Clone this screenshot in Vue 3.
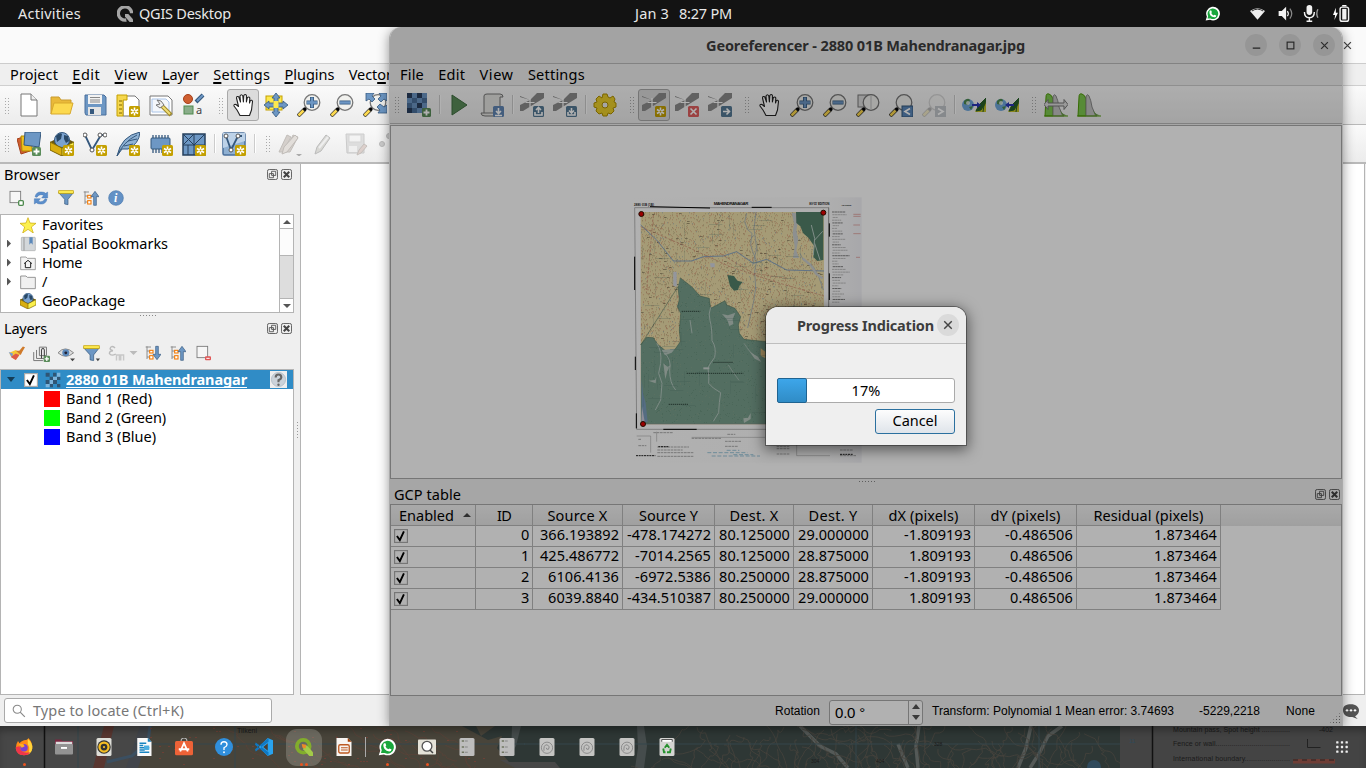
<script setup>
import { h } from 'vue'

// Spreads or tightens a label so that it takes the given width in pixels.
const vFit = {
  mounted(el, b) {
    if (!b.value) return
    const n = el.textContent.length
    const w = el.getBoundingClientRect().width
    el.style.letterSpacing = ((b.value - w) / n).toFixed(3) + 'px'
  },
}

const gold = '<g transform="translate(13 13)"><rect width="11" height="11" rx="1.5" fill="#c4a000"/><path d="M5.5 1.5v8M1.9 3.5l7.2 4M1.9 7.5l7.2-4" stroke="#fff" stroke-width="1.6"/><circle cx="5.5" cy="5.5" r="1" fill="#c4a000"/></g>'
const plusB = '<rect x="15" y="15" width="9" height="9" rx="1.5" fill="#5a8c5a"/><path d="M19.5 16.5v6M16.5 19.5h6" stroke="#fff" stroke-width="1.8"/>'
const glass = (c = '', o = 1) => `<g opacity="${o}"><path d="M1 23l7-7" stroke="#333" stroke-width="4"/><path d="M1.5 22.5l5-5" stroke="#fcd94f" stroke-width="2.6"/><path d="M7 17l3-3" stroke="#000" stroke-width="3"/><circle cx="15" cy="9.5" r="7.8" fill="#f1f1ee" stroke="#777" stroke-width="1.3"/>${c}</g>`
const gcp = '<path d="M17 0h7v5L3 18H0v-6l10-5L0 4V3l10 4z" fill="#8c8c8c"/><path d="M10 5v9M5.5 9.5h9" stroke="#fff" stroke-width="1.2"/>'
const badge = (bg, d) => `<rect x="13" y="13" width="11" height="11" rx="1.5" fill="${bg}"/><path d="${d}" stroke="#fff" stroke-width="1.6" fill="none"/>`
const tree = '<path d="M3 2v19M3 9h5M3 18h5M1 3h8" stroke="#888" fill="none" stroke-width="1.4"/><rect x="7" y="8" width="5" height="4" fill="#fff" stroke="#f57900" stroke-width="1.6"/><rect x="7" y="16" width="5" height="5" fill="#fff" stroke="#f57900" stroke-width="1.6"/>'
const checker = (a, b, c) => [[0, 0, a], [5, 0, b], [10, 0, a], [15, 0, b], [0, 5, b], [5, 5, c], [10, 5, b], [15, 5, c], [0, 10, c], [5, 10, b], [10, 10, a], [15, 10, b], [0, 15, a], [5, 15, c], [10, 15, b], [15, 15, c]].map(([x, y, f]) => `<rect x="${x}" y="${y}" width="5" height="5" fill="${f}"/>`).join('')
const hist = '<path d="M1 23L2 4q0-4 3-3t4 5v17z" fill="#7ec850" stroke="#4e9a06"/><path d="M9 23V4q1-4 3-1 2 4 3 11 2 6 5 9z" fill="#c4c4c4" stroke="#888"/><path d="M16 17q2 4 7 5.500h-5z" fill="#6d9a50"/><path d="M0 23h24" stroke="#4e9a06"/>'
const globe = '<circle cx="6" cy="12" r="6" fill="#6fa8dc"/><path d="M2 8q4-4 6-1l-2 5-4-1zM7 14l4-1-2 4z" fill="#4e8a4e"/><circle cx="6" cy="10" r="2" fill="#fff" opacity=".7"/><path d="M13 19l4-7 7-7v14z" fill="#c6c22a"/><path d="M14 18l3-6 7-7-1 6-4 6zM22 12l-1 7" fill="#27602a" stroke="#27602a"/>'
const box = '<path d="M0 10l12-6 12 6-12 6z" fill="#6b5a10"/><circle cx="12" cy="8" r="7.500" fill="#7ba2ce" stroke="#35587d"/><path d="M6 4q4-4 6-2l-1 5-4 3zM14 3l4 1 1 5-3 2-2-4z" fill="#294866"/><path d="M0 10l12 6v8L0 18z" fill="#d9ae10"/><path d="M24 10l-12 6v8l12-6z" fill="#fbf04c"/><path d="M0 10l12 6 12-6M12 16v8M0 10v8l12 6 12-6v-8" fill="none" stroke="#7c6400"/>'
const hand = '<path d="M9 22.500L6 17 3 13q-.5-2 2-1.500l2.500 2L5.500 5q.2-2.200 2.200-1.300L9.500 9 9 3q1.400-2.500 2.800 0l.6 6L12.800 2.500q1.600-2 2.600 0V9l1-4.500q1.800-1.200 2.400.5L18.500 10l.8-2.500q1.700-.8 2.200 1l-1 8.500-2 5.500z" fill="#fff" stroke="#222" stroke-width="1.100" stroke-linejoin="round"/>'
const pencil = '<path d="M4 22l2-7L15 3l4 3-9 13z" fill="#d8d8d4" stroke="#bbb"/><path d="M8 16l9-11" stroke="#eee" stroke-width="2"/>'
const arrowUp = '<path d="M16 23V10h-4l6-8 6 8h-4v13z" fill="#6d97c4" stroke="#35587d"/>'
const arrowDn = '<path d="M16 2v12h-4l6 8 6-8h-4V2z" fill="#6d97c4" stroke="#35587d"/>'
const funnel = '<path d="M1 4h22l-8 10v8l-5-1v-7z" fill="#6d97c4" stroke="#35587d"/><rect x="1" y="1" width="22" height="4" fill="#fce94f" stroke="#c4a000"/>'

const icons = {
  file: '<path d="M4 1h10l6 6v16H4z" fill="#fff" stroke="#777"/><path d="M14 1v6h6" fill="#eee" stroke="#777"/>',
  folder: '<path d="M1 21V4h8l2 3h10v4" fill="#e9b93a" stroke="#c99b2e"/><path d="M1 21L4 10h19l-3 11z" fill="#fcd94f" stroke="#d8a92d"/>',
  save: '<path d="M2 2h19l2 2v18H3l-1-2z" fill="#6d97c4" stroke="#4a6f9b"/><rect x="5" y="2" width="14" height="9" fill="#f2f2f2"/><path d="M7 4.500h10M7 7h10M7 9h10" stroke="#888"/><rect x="5" y="14" width="13" height="8" fill="#e4e4e4"/><rect x="7" y="16" width="4" height="5" fill="#35587d"/>',
  layout: '<path d="M7 3h12l4 4v16H7z" fill="#fff" stroke="#777"/><path d="M1 2h10v5H7v16H1z" fill="#f5d74e" stroke="#c4a000"/><path d="M3 8h3M3 12h3M3 16h3M3 20h3" stroke="#7c6400"/>' + gold,
  layouts: '<path d="M1 3h18l4 4v15H1z" fill="#fff" stroke="#777"/><path d="M3 6h14l3 3v10H3z" fill="#f4f7fb" stroke="#aac4e8"/><path d="M12 12l10 10" stroke="#a08a2a" stroke-width="4"/><path d="M13 13l8 8" stroke="#f0dd77" stroke-width="2"/><path d="M8 7l4 1 3 4-4 3-4-3 4-1z" fill="#eee" stroke="#777"/>',
  style: '<circle cx="6" cy="6" r="4.500" fill="#cf5f31" stroke="#a5401a"/><rect x="2" y="13" width="9" height="8" fill="#8aad8a" stroke="#4e8a4e"/><path d="M14 9l7-7" stroke="#35587d" stroke-width="4"/><path d="M15 8l6-6" stroke="#6d97c4" stroke-width="2"/><text x="14" y="21" font-size="11" font-family="Noto Sans" fill="#444">a</text>',
  hand,
  pan: '<rect x="2" y="3" width="16" height="14" fill="#fce94f" stroke="#c4a000"/><path d="M12 0l4 5h-2v5h5V8l5 4-5 4v-2h-5v5h2l-4 5-4-5h2v-5H5v2l-5-4 5-4v2h5V5H8z" fill="#6d97c4" stroke="#35587d" stroke-width=".8"/><rect x="9.500" y="8" width="5" height="7" fill="#fce94f"/>',
  zin: glass('<path d="M15 4v11M9.500 9.500h11" stroke="#35587d" stroke-width="4"/><path d="M15 4.500v10M10 9.500h10" stroke="#6d97c4" stroke-width="2.400"/>'),
  zout: glass('<path d="M9.500 9.500h11" stroke="#35587d" stroke-width="4"/><path d="M10 9.500h10" stroke="#6d97c4" stroke-width="2.400"/>'),
  zfull: glass() + '<path d="M3 0h8L9 3l3 3-3 3-3-3-3 2zM24 0h-8l2 3-3 3 3 3 3-3 3 2zM24 20h-9l2-3-3-3 3-3 4 3 3-2z" fill="#6d97c4" stroke="#35587d" stroke-width=".8"/>',
  zlayer: '<rect x="2" y="2" width="14" height="12" fill="#ddd" stroke="#777"/>' + glass('<path d="M15 2v14" stroke="#bbb"/>'),
  zlast: glass() + '<rect x="13" y="13" width="11" height="11" fill="#5b88ba" stroke="#35587d"/><path d="M21 15.500l-5 3 5 3" stroke="#fff" stroke-width="1.700" fill="none"/>',
  znext: glass('', 0.25) + '<rect x="13" y="13" width="11" height="11" fill="#c2c6ca"/><path d="M16 15.500l5 3-5 3" stroke="#fff" stroke-width="1.700" fill="none"/>',
  dsm: '<path d="M0 7l9-3 4 15-9 3z" fill="#cf5f31" stroke="#a5401a"/><path d="M4 4h11v15H5z" fill="#f0c020" stroke="#b08a00"/><path d="M8 0h16l-2 15-15-2z" fill="#6d97c4" stroke="#35587d"/>' + plusB,
  box: box + gold, boxs: box,
  vec: '<path d="M2 3l7 15 9-15h4" fill="none" stroke="#35587d" stroke-width="1.800"/><circle cx="2" cy="3" r="2" fill="#fff" stroke="#555"/><circle cx="9" cy="18" r="2" fill="#fff" stroke="#555"/><circle cx="17" cy="3" r="2" fill="#fff" stroke="#555"/><circle cx="22" cy="3" r="2" fill="#fff" stroke="#555"/>' + gold,
  feather: '<path d="M1 24Q5 4 24 0q-1 12-12 17H6z" fill="#8fb2d4" stroke="#35587d"/><path d="M1 24Q7 10 21 3M8 14l9-2M12 9l9-2" fill="none" stroke="#35587d"/>' + gold,
  chip: '<path d="M4 3v18M7 3v18M10 3v18M13 3v18M16 3v18M19 3v18" stroke="#35587d" stroke-width="1.300"/><rect x="2" y="6" width="19" height="11" rx="1" fill="#6d97c4" stroke="#35587d"/>' + gold,
  mesh: '<rect x="1" y="2" width="22" height="21" fill="#6d97c4" stroke="#253f5c" stroke-width="1.500"/><path d="M12 2v21M1 13h22M1 2l11 11L23 2M1 13L12 2M6 13v10" stroke="#253f5c" fill="none"/>' + gold,
  virt: '<rect x="1" y="1" width="22" height="22" rx="1.500" fill="#8fb0d2" stroke="#4a6f9b" stroke-width="1.500"/><path d="M1 1h22v8L1 16z" fill="#bdd2e8"/><path d="M4 4l5 14 7-14h4" fill="none" stroke="#35587d" stroke-width="1.800"/><circle cx="4" cy="4" r="2" fill="#fff" stroke="#555"/><circle cx="9" cy="18" r="2" fill="#fff" stroke="#555"/><circle cx="16" cy="4" r="2" fill="#fff" stroke="#555"/>' + gold,
  pencils: '<path d="M1 20L9 3l4 2-8 15zM7 20L15 3l5 2-8 15z" fill="#d4cfcb" stroke="#c2beba"/><path d="M4 22l2-7 11-12 3 3L9 20z" fill="#e2deda" stroke="#c0bcb8"/><path d="M18 22h6l-3 2.500z" fill="#aaa"/>',
  pencil,
  savee: '<g opacity=".55"><path d="M2 2h18v19H3z" fill="#ccc" stroke="#aaa"/><rect x="5" y="3" width="12" height="7" fill="#f2f2f2" stroke="#bbb"/><rect x="5" y="14" width="8" height="6" fill="#eee"/></g><path d="M13 23l2-5 5-6 3 2-6 7z" fill="#ddd0cc" stroke="#c5bfbb"/>',
  nodes: '<circle cx="5" cy="12" r="2.500" fill="#ccc" stroke="#bbb"/><circle cx="12" cy="4" r="2.500" fill="#ccc" stroke="#bbb"/>',
  add: '<rect x="3" y="2" width="16" height="17" fill="#f6f6f6" stroke="#777" stroke-width="1.300"/><rect x="16" y="16" width="7" height="7" rx="1.500" fill="#fff" stroke="#4e8a4e" stroke-width="2"/>',
  refresh: '<path d="M3 10Q5 2 13 3q4 0 6 2l3-2v9h-9l3-4Q9 5 6 11zM21 14q-2 8-10 7-4 0-6-2l-3 2v-8h9l-3 4q7 2 10-4z" fill="#5b8ecb" stroke="#3d6fae" stroke-width=".6"/>',
  funnel, funnelm: funnel + '<path d="M18 19h6l-3 4z" fill="#444"/>',
  up: tree + arrowUp, down: tree + arrowDn,
  info: '<circle cx="12" cy="12" r="11" fill="#6391c5" stroke="#4a78ad"/><text x="9" y="18" font-size="18" font-style="italic" font-weight="bold" font-family="Liberation Serif" fill="#fff">i</text>',
  star: '<path d="M12 1l3 8 9 .5-7 5.500 3 9-8-5.500L4 24l3-9-7-5.500L9 9z" fill="#fcf04f" stroke="#c8a400"/>',
  book: '<rect x="2" y="2" width="21" height="20" rx="1" fill="#d3d7da" stroke="#aaa"/><path d="M6 2v20" stroke="#999" stroke-width="1.500"/><path d="M14 2h5v11l-2.500-3-2.500 3z" fill="#5b88ba"/>',
  home: '<path d="M1 3h8l2 2h12v17H1z" fill="#f3f3f3" stroke="#777"/><path d="M6 13l6-5 6 5M8 12v7h8v-7" fill="none" stroke="#222" stroke-width="1.500"/>',
  dir: '<path d="M1 3h8l2 2h12v17H1z" fill="#f0f0f0" stroke="#888" stroke-width="1.300"/>',
  brush: '<path d="M2 11l9-4 6 6-6 8Q3 18 2 11z" fill="#f5c836"/><path d="M1 10l6 2-1 6z" fill="#7b9bd2"/><path d="M4 17l7-5 5 2-5 7z" fill="#dd5a4a"/><path d="M11 8l7 6 2-4 4-7-3-1-5 6z" fill="#cf7a2a"/>',
  group: '<path d="M1 10v12h13M5 7v12h13M9 3h10v12H9z" fill="none" stroke="#777" stroke-width="1.400"/><path d="M12 19V7q2-5 4 0v9" fill="none" stroke="#444" stroke-width="1.500"/>' + plusB,
  eye: '<path d="M0 11Q10 0 22 11 11 21 0 11z" fill="#ddd" stroke="#888" stroke-width="1.400"/><circle cx="11" cy="11" r="5" fill="#5b88ba"/><circle cx="11" cy="11" r="2" fill="#223"/><path d="M17 19h7l-3.500 4z" fill="#444"/>',
  eps: '<path d="M10 4Q4 0 3 5q0 2 4 3-5 0-5 4 2 4 9 1" stroke="#bbb" stroke-width="2" fill="none"/><path d="M12 22v-8h4v8M18 22v-8h4v8" stroke="#c8c8c8" stroke-width="2" fill="none"/>',
  rem: '<rect x="3" y="2" width="16" height="17" fill="#f6f6f6" stroke="#777" stroke-width="1.300"/><rect x="15" y="17" width="9" height="6" rx="1.500" fill="#e05656"/><path d="M17 20h5" stroke="#fff" stroke-width="1.500"/>',
  raster: '<path d="M1 1h6v6H1zM7 7h5v5H7zM12 12h6v6h-6zM1 12h6v6H1zM12 1h5v6h-5zM18 7h5v5h-5zM7 18h5v5H7zM18 18h5v5h-5z" fill="#2f5575"/><path d="M18 1h5v6h-5zM12 7h6v5h-6zM7 12h5v6H7zM1 18h6v5H1z" fill="#7db4dc"/>',
  qm: '<rect width="24" height="24" fill="#eee"/><circle cx="12" cy="12" r="10" fill="#ccd3da" stroke="#a8b5c0"/><path d="M8 9q0-4 4-4t4 4q0 2-4 4v3" fill="none" stroke="#666" stroke-width="3"/><circle cx="12" cy="19.500" r="1.700" fill="#666"/>',
  addr: checker('#293f5e', '#6d97c4', '#4a6f9b') + plusB,
  play: '<path d="M5 2l15 10L5 22z" fill="#5a8c5a" stroke="#3f6e40"/>',
  script: '<path d="M4 20V3q0-2 3-2h13q3 0 3 3h-3v16H1q0 3 4 3h13" fill="#e6e6e2" stroke="#777"/>' + badge('#6186b5', 'M18.500 15v5M16 18l2.500 2.500L21 18M15 22.500h7'),
  gload: gcp + badge('#557a95', 'M18.500 20v-5M16 17l2.500-2.500L21 17M15 19v3h7v-3'),
  gsave: gcp + badge('#557a95', 'M18.500 15v5M16 17.500l2.500 2.500 2.500-2.500M15 19v3h7v-3'),
  gear: '<path d="M10 1h4l1 3 2 1 3-2 2 3-1 3 2 1v4l-3 1 1 3-3 3-3-1-1 3h-4l-1-3-3 1-3-3 1-3-3-1v-4l3-1-1-3 3-3 3 2z" fill="#ecd02c" stroke="#b09000"/><circle cx="12" cy="12" r="3" fill="#eee" stroke="#b09000"/>',
  gadd: gcp + gold,
  gdel: gcp + badge('#e05f5f', 'M15.500 15.500l6 6M21.500 15.500l-6 6'),
  gmove: gcp + badge('#557a95', 'M15 18.500h6M18.500 15.500l3 3-3 3'),
  lg: globe + '<path d="M10 11h5V9l4 3-4 3v-2h-5z" fill="#2a36b8"/>',
  lq: globe + '<path d="M19 11h-5V9l-4 3 4 3v-2h5z" fill="#2a36b8"/>',
  hist2: hist + '<path d="M0 11.500l4-5v3.500h16V6.500l4 5-4 5V13H4v3.500z" fill="#ddd" stroke="#777"/>',
  hist,
  // status area and dock
  qlogo: '<path d="M14 21A10 10 0 1 1 22 11" fill="none" stroke="#a5a5a5" stroke-width="5"/><path d="M12 12h5l7 8v4h-5l-7-8z" fill="#a5a5a5"/>',
  wa: '<path d="M1 23l2-6A11 11 0 1 1 8 22z" fill="#fff"/><path d="M4 20l1-4a8.500 8.500 0 1 1 4 4z" fill="#19a63c"/><path d="M8 7l2 0 1 3-1 1q1 3 4 4l1-1 3 1q0 3-3 3-8-1-8-9z" fill="#fff"/>',
  wifi: '<path d="M0 8Q12-1 24 8L12 22z" fill="#eee"/><path d="M3 8q9-6 18 0" stroke="#222" fill="none" stroke-width="1.500"/>',
  sound: '<path d="M1 8h5l7-7v22l-7-7H1z" fill="#f2f2f2"/><path d="M15 8q3 4 0 8" stroke="#eee" stroke-width="2" fill="none"/><path d="M19 4q6 8 0 16" stroke="#888" stroke-width="2" fill="none"/>',
  mic: '<rect x="5" y="0" width="8" height="14" rx="4" fill="#f2f2f2"/><path d="M2 10q0 8 7 8t7-8M9 18v5M5 23h8" stroke="#f2f2f2" stroke-width="2" fill="none"/><path d="M21 6q-3 6 0 12" stroke="#999" stroke-width="2" fill="none"/>',
  batt: '<path d="M4 4L0 14h3l-1 7 5-10H4z" fill="#fff"/><rect x="10" y="3" width="12" height="20" rx="3" fill="none" stroke="#f2f2f2" stroke-width="2"/><rect x="13" y="5.500" width="6" height="15" fill="#f2f2f2"/><path d="M13 1h6" stroke="#fff" stroke-width="2"/>',
  firefox: '<path d="M12 3q5 0 6-3 6 7 5 14-2 9-11 9T1 14Q1 8 4 4l2 3q2-3 6-4z" fill="#ff8a16"/><path d="M17 1q7 6 6 13-1 6-6 8 4-7 0-14z" fill="#ffd43a"/><path d="M1 12q0 11 11 11 6 0 8-4-12 3-14-8z" fill="#f0354b"/><circle cx="12" cy="13" r="5" fill="#7a3fd0"/><path d="M5 8l6 0 2 3-4 2z" fill="#ffae22"/>',
  files: '<path d="M0 2h8l2 2h14v6H0z" fill="#792740"/><rect x="1" y="5" width="22" height="6" fill="#ddd"/><rect y="8" width="24" height="14" rx="1.500" fill="#939393"/><rect x="8" y="12" width="8" height="2.500" fill="#fff"/>',
  rhythm: '<rect x="2" y="0" width="20" height="24" rx="2" fill="#deded8"/><circle cx="12" cy="12" r="9" fill="#333"/><circle cx="12" cy="12" r="6" fill="none" stroke="#f5bd24" stroke-width="3"/><circle cx="12" cy="12" r="1.500" fill="#f5bd24"/>',
  writer: '<path d="M3 0h14l5 5v19H3z" fill="#fafafa"/><path d="M17 0v5h5z" fill="#1b7fb8"/><path d="M6 7h9M6 10h5M6 13h13M6 16h7M6 19h13" stroke="#1783c0" stroke-width="1.800"/><rect x="12" y="10" width="7" height="6" fill="#4caee0"/>',
  soft: '<path d="M8 5q0-5 4-5t4 5" fill="none" stroke="#bbb" stroke-width="1.500"/><rect y="4" width="24" height="19" rx="2" fill="#ed6237"/><path d="M7 18l5-11 5 11M5 15h14" stroke="#fff" stroke-width="2.400" fill="none"/>',
  help: '<circle cx="12" cy="12" r="12" fill="#308fdc"/><path d="M8 9q0-4 4-4t4 4q0 2-4 4v3" fill="none" stroke="#fff" stroke-width="1.800"/><circle cx="12" cy="19" r="1.200" fill="#fff"/>',
  code: '<path d="M17 0l7 3v18l-7 3L5 12z" fill="#29a3ee"/><path d="M1 6l17 13v5L0 9zM1 18L18 5V0L0 15z" fill="#0f78c4"/><path d="M17 7v10l-6-5z" fill="#493f34"/>',
  qgis: '<circle cx="11" cy="11" r="8.500" fill="none" stroke="#82ad2c" stroke-width="5"/><path d="M11 10h5l8 9v5h-5l-8-9z" fill="#a3cb48"/><path d="M9 8l6 1-1 5-4-1z" fill="#ee8a27"/>',
  impress: '<path d="M2 0h15l5 5v19H2z" fill="#f8f5f2"/><path d="M17 0v5h5z" fill="#a33e03"/><rect x="5" y="9" width="14" height="11" rx="2" fill="none" stroke="#bd5a22" stroke-width="1.800"/><path d="M8 13h9M8 16h9" stroke="#bd5a22" stroke-width="1.500"/>',
  viewer: '<rect y="2" width="24" height="20" rx="1" fill="#e4e2d8"/><circle cx="12" cy="11" r="6.500" fill="#fff" stroke="#555" stroke-width="1.800"/><path d="M16 16l4 4" stroke="#444" stroke-width="2"/>',
  drive: '<rect x="2" width="20" height="24" rx="2" fill="#bdbdbd"/><path d="M5 4h3M5 12h3M5 19h3" stroke="#6f7560" stroke-width="2"/><path d="M9 4h4M9 12h4M9 19h4" stroke="#777"/>',
  disk: '<rect x="2" width="20" height="24" rx="2" fill="#c4c4c2"/><circle cx="12" cy="13" r="7.500" fill="none" stroke="#8b8b8b" stroke-width="1.300"/><path d="M8 17q-1-8 4-8 5 2 2 6-3 1-3-2" fill="none" stroke="#888" stroke-width="1.300"/>',
  trash: '<rect x="2" width="20" height="24" rx="2" fill="#d4d4d2"/><path d="M5 5V2h14v3" fill="#fff" stroke="#444" stroke-width="1.200"/><path d="M9 13l3-4 3 4M17 14l-1 5h-4M7 14l1 5h2" fill="none" stroke="#26912e" stroke-width="2.500"/>',
  grid: [3, 11, 19].map(y => [3, 11, 19].map(x => `<rect x="${x - 1}" y="${y - 1}" width="4" height="4" rx="1" fill="#eee"/>`).join('')).join(''),
  search: '<circle cx="9" cy="9" r="7" fill="none" stroke="#888" stroke-width="1.800"/><path d="M14 14l8 8" stroke="#888" stroke-width="2"/>',
  bubble: '<path d="M12 2c7 0 12 4 12 9s-4 8-6 9l4 4-8-3C6 22 0 18 0 11s5-9 12-9z" fill="#555"/><circle cx="6" cy="11" r="1.800" fill="#fff"/><circle cx="12" cy="11" r="1.800" fill="#fff"/><circle cx="18" cy="11" r="1.800" fill="#fff"/>',
  float: '<rect x="1" y="1" width="22" height="22" rx="4" fill="none" stroke="#555" stroke-width="2"/><path d="M10 5h9v9h-9zM5 10h9v9H5z" fill="none" stroke="#555" stroke-width="2"/>',
  shut: '<rect x="1" y="1" width="22" height="22" rx="4" fill="none" stroke="#555" stroke-width="2"/><path d="M6 6l12 12M18 6L6 18" stroke="#444" stroke-width="4.500"/>',
  check: '<rect x="1" y="1" width="22" height="22" fill="#fff" stroke="#aaa" stroke-width="2"/><path d="M5 12l5 7 7-15" fill="none" stroke="#000" stroke-width="3.300"/>',
  x: '<path d="M3 3l18 18M21 3L3 21" stroke="#444" stroke-width="3.400" fill="none"/>',
  max: '<rect x="3" y="3" width="18" height="18" fill="none" stroke="#333" stroke-width="3"/>',
  min: '<path d="M2 19h20" stroke="#333" stroke-width="3"/>',
}
const Ico = (p) => h('svg', { viewBox: '0 0 24 24', width: p.s || 24, height: p.s || 24, class: 'ico', innerHTML: icons[p.n] })
Ico.props = ['n', 's']

const menu = [['P', 'ro', 48, 'j', 'ect'], ['E', 'dit', 28], ['V', 'iew', 33], ['L', 'ayer', 37], ['S', 'ettings', 57], ['P', 'lugins', 50], ['Vect', '', 43, 'o', 'r']]
const geoMenu = [['File', 24], ['Edit', 27], ['View', 34], ['Settings', 57]]
const bar1 = ['|', 'file', 'folder', 'save', 'layout', 'layouts', 'style', '|', '*hand', 'pan', 'zin', 'zout', 'zfull']
const bar2 = ['|', 'dsm', 'box', 'vec', 'feather', 'chip', 'mesh', '-', 'virt', '-', '|', 'pencils', 'pencil', 'savee', 'nodes']
const geoBar = ['|', 'addr', '-', 'play', 'script', '-', 'gload', 'gsave', '-', 'gear', '|', '*gadd', 'gdel', 'gmove', '|', 'hand', 'zin', 'zout', 'zlayer', 'zlast', 'znext', '-', 'lg', 'lq', '|', 'hist2', 'hist']
const browser = [['star', 'Favorites', 61], ['book', 'Spatial Bookmarks', 126, 1], ['home', 'Home', 40, 1], ['dir', '/', 6, 1], ['boxs', 'GeoPackage', 83]]
const bands = [['#f00', 'Band 1 (Red)', 86], ['#0f0', 'Band 2 (Green)', 100], ['#00f', 'Band 3 (Blue)', 90]]
const cols = [['Enabled', 55], ['ID', 14], ['Source X', 60], ['Source Y', 59], ['Dest. X', 49], ['Dest. Y', 49], ['dX (pixels)', 70], ['dY (pixels)', 70], ['Residual (pixels)', 110]]
const rows = [
  [['0', 8], ['366.193892', 79], ['-478.174272', 84], ['80.125000', 71], ['29.000000', 71], ['-1.809193', 67], ['-0.486506', 68], ['1.873464', 63]],
  [['1', 8], ['425.486772', 79], ['-7014.2565', 76], ['80.125000', 71], ['28.875000', 71], ['1.809193', 62], ['0.486506', 63], ['1.873464', 63]],
  [['2', 8], ['6106.4136', 71], ['-6972.5386', 76], ['80.250000', 71], ['28.875000', 71], ['-1.809193', 67], ['-0.486506', 68], ['1.873464', 63]],
  [['3', 8], ['6039.8840', 71], ['-434.510387', 84], ['80.250000', 71], ['29.000000', 71], ['1.809193', 62], ['0.486506', 63], ['1.873464', 63]],
]
const dock = [['firefox', 1], ['files'], ['rhythm'], ['writer'], ['soft'], ['help'], ['code'], ['qgis', 2], ['impress'], ['sep'], ['wa', 1], ['viewer', 1], ['drive'], ['drive'], ['disk'], ['disk'], ['disk'], ['trash']]

let seed = 7
const rnd = () => (seed = (seed * 16807) % 2147483647) / 2147483647
const specks = (n, x, y, w, hh, a = 3, b = 3) => {
  let d = ''
  for (let i = 0; i < n; i++) {
    const px = x + Math.floor((rnd() * w) / 3) * 3
    const py = y + Math.floor((rnd() * hh) / 3) * 3
    d += `M${px} ${py}h${a}v${b}h-${a}z`
  }
  return d
}
const redSp = specks(2300, 63, 67, 546, 400)
const grySp = specks(1900, 63, 67, 546, 400)
const bluSp = specks(320, 63, 67, 546, 400)
const blkSp = specks(110, 63, 67, 540, 400, 8, 2)
const grnSp = specks(900, 63, 264, 546, 437)
const drkSp = specks(600, 63, 264, 546, 437)
const gridV = specks(45, 63, 70, 540, 560, 1, 40)
const gridH = specks(45, 63, 70, 500, 600, 40, 1)
const legend = Array.from({ length: 34 }, (_, i) => [636 + (i % 3), 66 + i * 8.200, 14 + rnd() * 40])
const foot = [[315, 754, 48], [315, 769, 38], [112, 780, 76], [112, 788, 110], [112, 799, 110], [470, 770, 40], [470, 776, 40], [470, 792, 38], [660, 780, 38], [660, 797, 50], [215, 745, 90], [100, 728, 60], [322, 733, 24], [55, 748, 10], [55, 767, 24], [112, 771, 95]]
const footBlue = [[320, 781, 38], [262, 788, 120], [275, 798, 145], [340, 794, 60]]

const wig = (x, y, n, dx, dy, j) => {
  let d = `M${x.toFixed(0)} ${y.toFixed(0)}`
  for (let i = 0; i < n; i++) {
    d += `q${(dx / 2 + (rnd() - 0.5) * j).toFixed(1)} ${(dy / 2 + (rnd() - 0.5) * j).toFixed(1)} ${(dx + (rnd() - 0.5) * j).toFixed(1)} ${(dy + (rnd() - 0.5) * j).toFixed(1)}`
  }
  return d
}
const contours = Array.from({ length: 62 }, (_, i) => wig(690 + i * 6.700, rnd() * 30 - 5, 6, i % 2 ? 5 : -4, 9, 13)).join('')
const contours2 = Array.from({ length: 9 }, () => wig(560 + rnd() * 440, rnd() * 42, 8, 12, 2, 15)).join('')
const roads = Array.from({ length: 14 }, () => wig(150 + rnd() * 300, rnd() * 20, 6, 11, 6, 14)).join('')
const dots = specks(60, 150, 2, 340, 38, 2, 1)
</script>

<template>
  <div class="desk">
    <header class="top">
      <span v-fit="63" class="act">Activities</span>
      <Ico n="qlogo" :s="16" class="ql" /><span v-fit="92">QGIS Desktop</span>
      <span v-fit="34" class="date">Jan 3</span><span v-fit="53" class="time">8:27 PM</span>
      <span class="tray"><Ico n="wa" :s="15" class="t1" /><Ico n="wifi" :s="15" class="t2" /><Ico n="sound" :s="15" class="t3" /><Ico n="mic" :s="17" class="t4" /><Ico n="batt" :s="17" /></span>
    </header>

    <section class="main">
      <div class="mtitle"><Ico n="x" :s="9" /></div>
      <nav class="menu"><span v-for="m in menu" :key="m[0] + m[1]" v-fit="m[2]"><u v-if="m[0].length === 1 && !m[3]">{{ m[0] }}</u><template v-else>{{ m[0] }}</template>{{ m[1] }}<u v-if="m[3]">{{ m[3] }}</u>{{ m[4] }}</span></nav>
      <div v-for="(b, k) in [bar1, bar2]" :key="k" class="bar" :class="'bar' + k">
        <template v-for="(i, n) in b" :key="n">
          <i v-if="i === '|'" class="grip" :class="{ first: !n }"></i>
          <i v-else-if="i === '-'" class="sep"></i>
          <span v-else class="tool" :class="{ on: i[0] === '*' }"><Ico :n="i.replace('*', '')" /></span>
        </template>
      </div>
      <div class="body">
        <aside>
          <div class="ptitle"><span v-fit="56">Browser</span><Ico n="float" :s="11" /><Ico n="shut" :s="11" /></div>
          <div class="ptools"><span v-for="i in ['add', 'refresh', 'funnel', 'up', 'info']" :key="i"><Ico :n="i" :s="16" /></span></div>
          <div class="tree btree">
            <div class="list">
              <div v-for="r in browser" :key="r[1]" class="row"><i class="tw" :class="{ has: r[3] }"></i><Ico :n="r[0]" :s="16" /><span v-fit="r[2]">{{ r[1] }}</span></div>
            </div>
            <div class="scroll"><i class="ar upa"></i><i class="thumb"></i><i class="track"></i><i class="ar dna"></i></div>
          </div>
          <div class="split"><i></i></div>
          <div class="ptitle lt"><span v-fit="43">Layers</span><Ico n="float" :s="11" /><Ico n="shut" :s="11" /></div>
          <div class="ptools lay"><span v-for="i in ['brush', 'group', 'eye', 'funnelm', 'eps']" :key="i"><Ico :n="i" :s="17" /></span><i class="dd"></i><span v-for="i in ['down', 'up', 'rem']" :key="i"><Ico :n="i" :s="16" /></span></div>
          <div class="tree ltree">
            <div class="row sel"><i class="opn"></i><Ico n="check" :s="14" /><Ico n="raster" :s="16" class="ras" /><b v-fit="181">2880 01B Mahendranagar</b><Ico n="qm" :s="17" class="qm" /></div>
            <div v-for="b in bands" :key="b[1]" class="row band"><svg width="16" height="16"><rect width="16" height="16" :fill="b[0]" /></svg><span v-fit="b[2]">{{ b[1] }}</span></div>
          </div>
        </aside>
        <div class="vsplit"><i></i></div>
        <div class="canvas"></div>
      </div>
      <footer class="mstat"><div class="loc"><Ico n="search" :s="14" /><span v-fit="151">Type to locate (Ctrl+K)</span></div><Ico n="bubble" :s="16" /></footer>
    </section>

    <section class="geo">
      <div class="gtitle"><b v-fit="319">Georeferencer - 2880 01B Mahendranagar.jpg</b>
        <div class="wb"><i><Ico n="min" :s="9" /></i><i><Ico n="max" :s="9" /></i><i><Ico n="x" :s="9" /></i></div>
      </div>
      <nav class="menu gm"><span v-for="m in geoMenu" :key="m[0]" v-fit="m[1]">{{ m[0] }}</span></nav>
      <div class="bar gbar">
        <template v-for="(i, n) in geoBar" :key="n">
          <i v-if="i === '|'" class="grip" :class="{ first: !n }"></i>
          <i v-else-if="i === '-'" class="sep"></i>
          <span v-else class="tool" :class="{ on: i[0] === '*' }"><Ico :n="i.replace('*', '')" /></span>
        </template>
      </div>
      <div class="view">
        <svg class="sheet" width="250" height="280" viewBox="0 0 750 840">
          <defs>
            <linearGradient id="pg" x1="0" x2="1"><stop offset="0" stop-color="#fff" /><stop offset=".85" stop-color="#fcfcfc" /><stop offset="1" stop-color="#f2f2f6" /></linearGradient>
            <clipPath id="grn"><path d="M180 263L215 290 240 318 268 325 272 355 315 332 320 345 345 355 362 380 355 405 358 430 372 448 438 455 612 460V702H62V465L80 442 100 443 112 462 140 485 165 478 181 455 178 420 182 370 172 350 178 330 174 290z" /></clipPath>
          </defs>
          <rect x="25" y="22" width="700" height="796" fill="url(#pg)" />
          <rect x="62" y="66" width="550" height="637" fill="#eedfaa" />
          <path :d="redSp" fill="#cf8668" opacity=".5" /><path :d="grySp" fill="#a89b72" opacity=".5" /><path :d="bluSp" fill="#88a6b6" opacity=".6" /><path :d="blkSp" fill="#4a4232" opacity=".6" />
          <path d="M62 105L110 150 160 213 215 213 250 200 310 198 350 185 400 220 440 208 500 240 612 243" fill="none" stroke="#8ba6c2" stroke-width="3" />
          <path d="M380 70l-6 26 10 24 12 10-4 34 6 20 12 30-6 30 3 50-6 40-18 80M540 190l10 20 30 20 16 30 14 40M408 66l-6 50 8 60-12 50" fill="none" stroke="#96aaba" stroke-width="2.600" opacity=".8" />
          <path d="M62 110L200 170 330 230 480 280 612 318M100 75L80 300M300 190l100 60 100 15" fill="none" stroke="#c9806a" stroke-width="1.800" stroke-dasharray="9 4" />
          <path d="M515 68h12l7 24-5 30 6 26-6 34 8 22h-18l5-34-6-40 4-30z" fill="#ccd0d0" />
          <path d="M528 66h82v144l-18 3-12-12 3-32-18-26-16-14-8-20-12-10z" fill="#54806a" />
          <path d="M580 195l4-50-10-40M584 150l24-26M600 210l-16-50" fill="none" stroke="#b7cbc2" stroke-width="3" />
          <path d="M548 205l24 20 16 26 20 14" fill="none" stroke="#ccd0d0" stroke-width="7" />
          <path d="M322 255l20 3 10 14 16 4-10 12-4 12-12 2-12-14z" fill="#54806a" />
          <path d="M160 245h10v45l-10-3zM270 220h14v12h-12z" fill="#d4d9e4" />
          <g clip-path="url(#grn)">
            <rect x="62" y="260" width="550" height="443" fill="#789f8c" />
            <path :d="grnSp" fill="#5f8b75" opacity=".5" /><path :d="drkSp" fill="#96a98d" opacity=".35" />
          </g>
          <path d="M180 263L215 290 240 318 268 325 272 355 315 332 320 345 345 355 362 380 355 405 358 430 372 448 438 455M62 465L80 442 100 443 112 462 140 485 165 478 181 455 178 420 182 370 172 350 178 330 174 290z" fill="none" stroke="#466e5b" stroke-width="1.500" />
          <path d="M272 352q-8 20-2 40t6 60q14 20 8 50l-14 20-6 12q4 30 2 46l14 14 22 14-4 30-2 30-16 26M110 460q16 20 12 60l-6 30 10 30-4 50-16 30M135 490q20 20 14 50 0 40 18 60M210 390l6 40" fill="none" stroke="#b5c8c0" stroke-width="3" />
          <path d="M250 535h18" stroke="#c9d4d0" stroke-width="6" /><path d="M325 525l16 24 16 22M372 460q20 30 34 40" fill="none" stroke="#a9beb4" stroke-width="2.500" />
          <path d="M306 372l18 4 22-8-8 20 2 14-12 6-6-18zM125 480l40-4-10 12-20 8zM130 520l12 10 10-4-10 18-6 24zM85 572l20-2 4-10-2 20zM370 685l14-2 8-14v18l-20 12zM370 468l24 20 20 12 10 16-20-10-16-22z" fill="#b9c8c0" />
          <path d="M65 570l4 40 8 30 6 55-18 4z" fill="#7b9ebc" /><path d="M66 650l8 45h-10z" fill="#ccd" />
          <path d="M422 475l14 10v20l-14-8z" fill="#eac988" />
          <path :d="gridV + gridH" fill="#4f7870" opacity=".45" />
          <path d="M185 364h56M280 517h60M200 550h170M146 643h58" stroke="#24372f" stroke-width="2.500" stroke-dasharray="4 2" />
          <path d="M44 53H626V718H50zM626 52v666" fill="none" stroke="#888" stroke-width="1.800" />
          <path d="M90 50l180 4M395 52h60M44 200v100M46 500v40M49 670v45M628 100v40M628 250v80M130 718h100" stroke="#000" stroke-width="3" />
          <path d="M60 702H612" stroke="#888" stroke-width="1.500" />
          <g font-family="Liberation Sans" font-weight="bold" fill="#222"><text x="281" y="45" font-size="13" textLength="104">MAHENDRANAGAR</text><text x="42" y="49" font-size="9" textLength="60">2880 01B (1B)</text><text x="568" y="45" font-size="9" textLength="60">80°15' EDITION</text><text x="665" y="48" font-size="7">LEGEND</text></g>
          <path v-for="(l, i) in legend" :key="i" :d="`M${l[0]} ${l[1]}h${l[2]}`" :stroke="i % 4 ? '#999' : '#333'" stroke-width="1.800" stroke-dasharray="7 1" />
          <path d="M700 73h22M700 79h22M700 105h20M700 131h22M708 202h12" stroke="#dfa09c" stroke-width="2.500" />
          <path v-for="(l, i) in foot" :key="'f' + i" :d="`M${l[0]} ${l[1]}h${l[2]}`" stroke="#777" stroke-width="1.800" stroke-dasharray="8 2" />
          <path v-for="(l, i) in footBlue" :key="'b' + i" :d="`M${l[0]} ${l[1]}h${l[2]}`" stroke="#6fadca" stroke-width="2" stroke-dasharray="12 5" />
          <path d="M50 738h42v50M215 742h220M530 760v37h100M110 725v30" fill="none" stroke="#999" stroke-width="1.500" />
          <path d="M48 797h58M115 770h30M660 793h40" stroke="#222" stroke-width="3" stroke-dasharray="6 2" />
          <g fill="#e00000" stroke="#310" stroke-width="3"><circle cx="64" cy="72" r="7.500" /><circle cx="610" cy="68" r="7.500" /><circle cx="69" cy="702" r="7.500" /></g>
        </svg>
      </div>
      <div class="split gs"><i></i></div>
      <div class="ptitle gt"><span v-fit="67">GCP table</span><Ico n="float" :s="11" /><Ico n="shut" :s="11" /></div>
      <div class="tbl">
        <div class="tr th"><span v-for="(c, n) in cols" :key="c[0]"><em v-fit="c[1]">{{ c[0] }}</em><i v-if="!n" class="sort"></i></span></div>
        <div v-for="(r, n) in rows" :key="n" class="tr"><span><Ico n="check" :s="14" /></span><span v-for="(c, k) in r" :key="k"><em v-fit="c[1]">{{ c[0] }}</em></span></div>
      </div>
      <footer class="gstat"><span v-fit="45">Rotation</span><div class="spin"><span v-fit="30">0.0 °</span><div><i class="ar upa"></i><i class="ar dna"></i></div></div><span v-fit="242">Transform: Polynomial 1 Mean error: 3.74693</span><span v-fit="61" class="xy">-5229,2218</span><span v-fit="29" class="none">None</span></footer>
      <div class="size"></div>
      <div class="dim"></div>
    </section>

    <section class="dlg">
      <div class="dt"><b v-fit="137">Progress Indication</b><i><Ico n="x" :s="10" /></i></div>
      <div class="pb"><div class="fill" :style="{ width: 17 + '%' }"></div><span v-fit="29">17%</span></div>
      <button><span v-fit="45">Cancel</span></button>
    </section>

    <footer class="dock">
      <svg class="wall" width="1366" height="42" viewBox="0 0 1366 42">
        <rect width="1366" height="42" fill="#474747" />
        <path d="M150 0H530L525 34 500 34 515 42H130z" fill="#48443a" />
        <path d="M140 0h12l-14 42h-12z" fill="#42454b" /><path d="M104 0h10l-10 42H93z" fill="#593630" />
        <path d="M150 0l-2 16-16 14-25 6" fill="none" stroke="#3b4f61" stroke-width="3" />
        <path d="M462 0h14l5 10 14-10h625v42H560l-5-6-46 0-12-14 5-12-14 4z" fill="#2e3735" />
        <path d="M512 0h9l-5 20-5 8zM637 0h7l3 20-3 22h-9l3-20z" fill="#454c4c" />
        <path d="M800 0l20 20 16 8 12 14M919 0l-3 20 2 22M898 18l10 24M1031 0l-5 22-8 20M1062 0l-14 10-8 16-10 16" fill="none" stroke="#545957" stroke-width="3.500" />
        <path :d="contours + contours2" fill="none" stroke="#46433c" stroke-width=".8" />
        <path :d="roads" fill="none" stroke="#5b4238" stroke-width=".7" /><path :d="dots" fill="#6b4036" />
        <path d="M78 0v42M235 0v42M524 18h596M856 0v42M1039 0v42M135 18h390" stroke="#34474c" />
        <rect x="1120" width="246" height="42" fill="#444" /><path d="M1152.500 0v42M44.500 0v42" stroke="#111" stroke-width="1.500" />
        <g font-family="Liberation Sans" font-size="7" fill="#1a1a1a"><text x="237" y="7">Tilkeni</text><text x="1173" y="6" textLength="117">Mountain pass, Spot height ..............</text><text x="1173" y="19.500" textLength="117">Fence or wall.....................................</text><text x="1173" y="34.500" textLength="117">International boundary......................</text><text x="1319" y="6">-402</text><text x="1129" y="17" font-size="6" fill="#2f4a5a">11</text><text x="934" y="20" font-size="5">328</text><text x="811" y="37" font-size="5">304</text><text x="876" y="37" font-size="5">404</text></g>
        <path d="M1307.500 13v8.500h13" stroke="#222" fill="none" /><rect x="1293" y="33" width="42" height="4.500" fill="#6e3d35" /><path d="M1293 34h42" stroke="#222" stroke-dasharray="5 4" />
        <circle cx="1094" cy="41" r="7" fill="#304a5c" />
      </svg>
      <div class="apps"><template v-for="(d, n) in dock" :key="n"><i v-if="d[0] === 'sep'" class="dsep"></i><span v-else class="app" :class="{ cur: d[1] === 2 }"><Ico :n="d[0]" :s="18" /><u v-if="d[1]"><i v-for="k in d[1]" :key="k"></i></u></span></template><Ico n="grid" :s="14" class="all" /></div>
    </footer>
  </div>
</template>

<style>
html, body { overflow: hidden; background: #474747; }
</style>
<style scoped>
* { box-sizing: border-box; }
.desk { width: 1366px; height: 768px; position: relative; display: flex; flex-direction: column; font: 14.5px/19px "Noto Sans", "Open Sans", sans-serif; color: #000; overflow: hidden; }
span, b, em { white-space: nowrap; }
em { font-style: normal; display: inline-block; }
.ico { display: block; flex: none; }
.top { height: 27px; flex: none; background: #131313; color: #e8e8e8; display: flex; align-items: center; padding-left: 18px; z-index: 2; }
.ql { margin: 0 6px 0 36px; }
.date { margin-left: 404px; }
.time { margin-left: 10px; }
.tray { margin-left: auto; display: flex; align-items: center; padding-right: 16px; }
.t1 { margin-right: 30px; } .t2 { margin-right: 13px; } .t3 { margin-right: 10px; } .t4 { margin-right: 13px; }
.main { height: 699px; flex: none; background: #efefef; display: flex; flex-direction: column; }
.mtitle { height: 37px; background: #fafafa; border-bottom: 1px solid #ccc; display: flex; justify-content: flex-end; align-items: center; padding-right: 14px; }
.menu { height: 22px; border-bottom: 1px solid #cfcfcf; display: flex; gap: 14.3px; align-items: center; padding-left: 10px; }
.menu u { text-underline-offset: 2px; text-decoration-thickness: 1.5px; }
.bar { height: 39px; border-bottom: 1px solid #b9b9b9; background: linear-gradient(#fafafa, #ececec); display: flex; align-items: center; }
.bar1 { border-bottom-width: 2px; }
.grip { width: 16px; height: 17px; flex: none; background: radial-gradient(circle, #aaa 0.7px, transparent 1px) 7px 0 / 3px 3px repeat-y, radial-gradient(circle, #aaa 0.7px, transparent 1px) 10px 0 / 3px 3px repeat-y; }
.grip.first { width: 12.5px; background-position: 4px 0, 7px 0; }
.sep { width: 7px; height: 19px; flex: none; background: linear-gradient(90deg, transparent 3px, #ccc 3px, #ccc 4px, #fff 4px, #fff 5px, transparent 5px); }
.tool { width: 33px; height: 32px; display: flex; align-items: center; justify-content: center; flex: none; }
.on { background: #dcdcdc; border: 1px solid #a9a9a9; border-radius: 3px; width: 32px; margin-right: 1px; }
.body { flex: 1; display: flex; min-height: 0; }
aside { width: 294px; display: flex; flex-direction: column; }
.ptitle { height: 20px; display: flex; align-items: center; gap: 3px; padding: 0 2px 0 4px; flex: none; }
.ptitle span { margin-right: auto; }
.ptools { height: 30px; display: flex; align-items: center; padding: 0 0 2px 3.500px; flex: none; }
.ptools span { width: 25px; display: flex; justify-content: center; }
.tree { border: 1px solid #b4b4b4; background: #fff; }
.btree { height: 99px; display: flex; overflow: hidden; flex: none; }
.list { flex: 1; }
.row { height: 19px; display: flex; align-items: center; }
.list .row .ico { margin: 0 6px 0 3px; }
.tw { width: 16px; height: 8px; flex: none; }
.tw.has { background: #555; clip-path: polygon(6px 0, 10px 4px, 6px 8px); }
.scroll { width: 14px; border-left: 1px solid #b4b4b4; display: flex; flex-direction: column; }
.thumb { height: 28px; background: #fcfcfc; border: solid #b4b4b4; border-width: 1px 0; }
.track { flex: 1; background: #ddd; border-bottom: 1px solid #b4b4b4; }
.ar { height: 13px; background: #555; clip-path: polygon(3px 9px, 7px 5px, 11px 9px); }
.dna { clip-path: polygon(3px 5px, 11px 5px, 7px 9px); }
.split { height: 5px; padding-top: 1px; display: flex; justify-content: center; flex: none; }
.split i { width: 17px; height: 3px; background: radial-gradient(circle, #888 0.6px, transparent 1px) 0 0 / 3px 3px; }
.lay { height: 31px; padding-bottom: 1px; }
.dd { width: 10px; height: 4px; background: #bbb; clip-path: polygon(1px 0, 9px 0, 5px 4px); margin-right: 2px; }
.ltree { flex: 1; }
.sel { background: #308cc6; color: #fff; }
.sel b { border-bottom: 1px solid #fff; line-height: 15px; }
.opn { width: 8px; height: 5px; background: #153d57; clip-path: polygon(0 0, 100% 0, 50% 100%); margin: 0 9px 0 6px; }
.ras { margin: 0 5px 0 7px; }
.qm { margin-left: auto; margin-right: 6px; }
.band { padding-left: 43px; gap: 6px; }
.vsplit { width: 6px; display: flex; align-items: center; }
.vsplit i { width: 3px; height: 17px; margin-left: 2px; background: radial-gradient(circle, #999 0.6px, transparent 1px) 0 0 / 3px 3px; }
.canvas { flex: 1; background: #fff; border: 1px solid #b4b4b4; border-top: 0; margin-right: 1px; }
.mstat { height: 31px; display: flex; align-items: center; justify-content: space-between; padding: 0 7px 0 4px; flex: none; }
.loc { width: 268px; height: 25px; border: 1px solid #aaa; border-radius: 3px; background: #fff; display: flex; align-items: center; gap: 7px; padding-left: 7px; color: #777; }
.geo { position: absolute; left: 389px; top: 27px; width: 954px; height: 699px; border: 1px solid #aaa; border-top: 0; border-bottom: 0; border-radius: 12px 12px 0 0; background: #efefef; box-shadow: 0 2px 12px 0 rgba(0, 0, 0, 0.42); display: flex; flex-direction: column; overflow: hidden; }
.gtitle { height: 37px; flex: none; background: #ebebeb; border-bottom: 1px solid #bcbcbc; display: flex; justify-content: flex-end; align-items: center; color: #3d3d3d; }
.gtitle b { margin-right: 220px; }
.wb { display: flex; gap: 12px; padding-right: 7px; }
.wb i { width: 22px; height: 22px; border-radius: 50%; background: #d9d9d9; display: flex; align-items: center; justify-content: center; }
.gm { flex: none; }
.gbar { flex: none; height: 38px; }
.view { height: 354px; flex: none; margin-top: 1px; border: 1px solid #aaa; background: #fff; padding: 64px 0 0 229px; }
.sheet { display: block; }
.gs { height: 6px; }
.gt { height: 19px; padding-right: 2px; }
.tbl { height: 192px; flex: none; border: 1px solid #aaa; background: #fff; }
.tr { display: grid; grid-template-columns: 85px 57px 90px 92px 79px 79px 102px 102px 144px; height: 21px; }
.tr > span { border-right: 1px solid #b9b9b9; border-bottom: 1px solid #b9b9b9; text-align: right; padding-right: 3px; line-height: 17px; display: flex; justify-content: flex-end; }
.tr > span:first-child { justify-content: flex-start; align-items: center; padding-left: 3px; }
.th { background: linear-gradient(#f4f4f4, #e6e6e6); }
.th > span, .th > span:first-child { justify-content: center; padding: 0; line-height: 20px; }
.sort { width: 8px; height: 4px; background: #444; clip-path: polygon(50% 0, 100% 100%, 0 100%); margin-left: 9px; margin-right: -4px; }
.gstat { flex: 1; display: flex; align-items: center; font: 12px/15px "Liberation Sans", sans-serif; padding-left: 385px; }
.spin { width: 94px; height: 25px; margin: 2px 9px 0 9px; border: 1px solid #aaa; border-radius: 3px; background: #fff; display: flex; justify-content: space-between; align-items: center; font-size: 15px; padding-left: 5px; }
.spin div { width: 14px; border-left: 1px solid #aaa; height: 100%; display: flex; flex-direction: column; justify-content: center; }
.spin .ar { height: 11px; clip-path: polygon(3px 8px, 7px 3px, 11px 8px); }
.spin .dna { clip-path: polygon(3px 3px, 11px 3px, 7px 8px); }
.xy { margin-left: 25px; } .none { margin-left: 26px; }
.size { position: absolute; right: 1px; bottom: 2px; width: 12px; height: 12px; background: radial-gradient(circle, #777 0.7px, transparent 1px) 0 0 / 3px 3px; clip-path: polygon(100% 0, 100% 100%, 0 100%); }
.dim { position: absolute; inset: 0; background: rgba(0, 0, 0, 0.306); }
.dlg { position: absolute; left: 766px; top: 307px; width: 200px; height: 138px; background: #efefef; border-radius: 12px 12px 0 0; box-shadow: 0 0 0 1px rgba(0, 0, 0, 0.35), 0 3px 14px 2px rgba(0, 0, 0, 0.5); display: flex; flex-direction: column; }
.dt { height: 37px; background: #ebebeb; border-radius: 12px 12px 0 0; border-bottom: 1px solid #bebebe; display: flex; align-items: center; justify-content: flex-end; gap: 3px; padding-right: 7px; color: #3d3d3d; }
.dt i { width: 22px; height: 22px; border-radius: 50%; background: #dadada; display: flex; align-items: center; justify-content: center; }
.pb { height: 25px; width: 178px; margin: 34px 0 0 11px; border: 1px solid #aaa; border-radius: 3px; background: #fff; position: relative; display: flex; align-items: center; justify-content: center; }
.pb .fill { position: absolute; left: -1px; top: -1px; bottom: -1px; border: 1px solid #1f6391; border-radius: 2px; background: linear-gradient(#3da6ea, #308cc6); }
.dlg button { align-self: flex-end; width: 80px; height: 25px; margin: 6px 11px 0 0; padding: 0 0 2px; border: 1px solid #2b709f; border-radius: 3px; background: linear-gradient(#fdfdfd, #dfe4ea); font: inherit; line-height: 19px; }
.dock { position: relative; height: 42px; flex: none; overflow: hidden; }
.wall { position: absolute; left: 0; top: 0; }
.apps { position: relative; display: flex; height: 42px; align-items: center; padding-left: 4px; box-shadow: inset 0 7px 8px -3px rgba(0, 0, 0, 0.35); }
.app { width: 40px; height: 37px; display: flex; align-items: center; justify-content: center; position: relative; }
.cur { background: rgba(190, 190, 180, 0.3); border-radius: 11px; width: 36px; margin: 0 2px; }
.app u { position: absolute; bottom: 0; display: flex; gap: 2px; }
.app u i { width: 3px; height: 3px; border-radius: 50%; background: #e95420; }
.dsep { width: 1px; height: 20px; background: #aaa; margin: 0 1px; }
.all { margin: 0 17px 0 auto; }
</style>
